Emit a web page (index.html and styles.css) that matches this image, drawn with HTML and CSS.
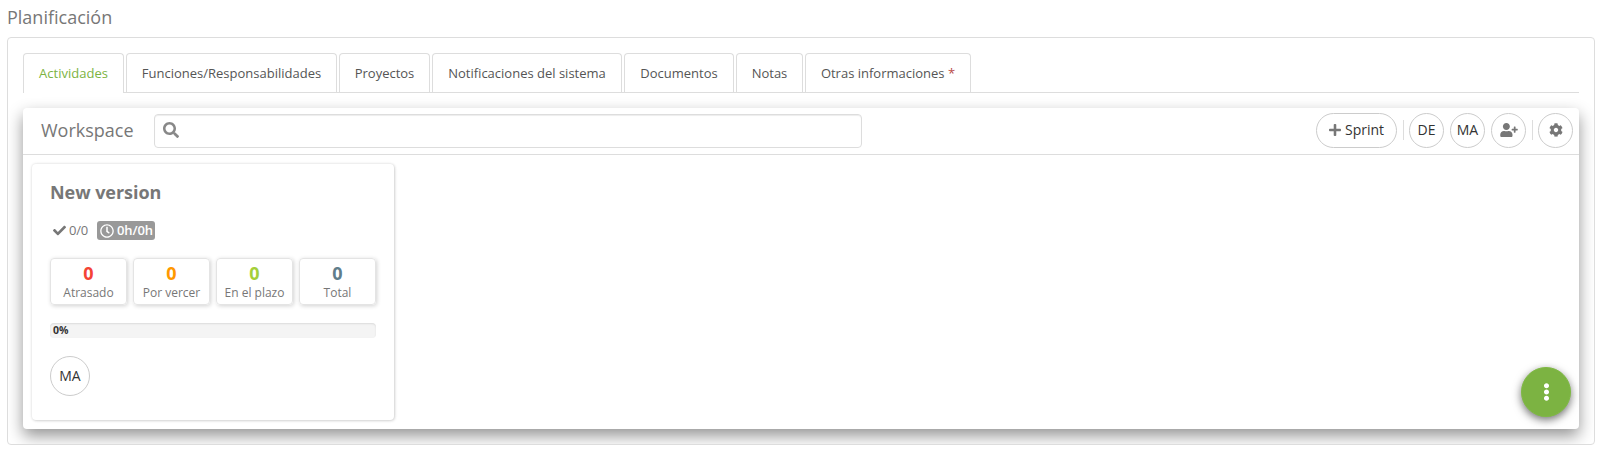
FILE: index.html
```html
<!DOCTYPE html>
<html lang="es">
<head>
<meta charset="utf-8">
<title>Planificación</title>
<link rel="stylesheet" href="styles.css">
</head>
<body>
<h1 class="page-title">Planificación</h1>
<main class="panel">
  <nav class="tabs">
    <a class="tab tab-actividades active">Actividades</a>
    <a class="tab tab-funciones">Funciones/Responsabilidades</a>
    <a class="tab tab-proyectos">Proyectos</a>
    <a class="tab tab-notificaciones">Notificaciones del sistema</a>
    <a class="tab tab-documentos">Documentos</a>
    <a class="tab tab-notas">Notas</a>
    <a class="tab tab-otras">Otras informaciones&nbsp;<span class="required">*</span></a>
  </nav>
  <section class="workspace">
    <header class="toolbar">
      <h2 class="toolbar-title">Workspace</h2>
      <div class="search">
        <svg class="icon" width="16" height="16" viewBox="0 0 512 512"><path d="M505 442.700L405.300 343c-4.500-4.500-10.600-7-17-7H372c27.600-35.300 44-79.700 44-128C416 93.100 322.900 0 208 0S0 93.100 0 208s93.100 208 208 208c48.300 0 92.700-16.400 128-44v16.300c0 6.400 2.500 12.500 7 17l99.700 99.700c9.400 9.400 24.600 9.400 33.900 0l28.300-28.300c9.400-9.400 9.400-24.600.1-34zM208 336c-70.700 0-128-57.200-128-128 0-70.700 57.200-128 128-128 70.700 0 128 57.200 128 128 0 70.700-57.200 128-128 128z"/></svg>
      </div>
      <div class="actions">
        <button class="pill sprint"><svg class="icon" width="12" height="14" viewBox="0 0 448 512"><path d="M416 208H272V64c0-17.670-14.330-32-32-32h-32c-17.670 0-32 14.330-32 32v144H32c-17.670 0-32 14.330-32 32v32c0 17.670 14.330 32 32 32h144v144c0 17.670 14.330 32 32 32h32c17.670 0 32-14.330 32-32V304h144c17.670 0 32-14.330 32-32v-32c0-17.670-14.330-32-32-32z"/></svg>Sprint</button>
        <span class="separator"></span>
        <button class="pill">DE</button>
        <button class="pill">MA</button>
        <button class="pill"><svg class="icon" width="18" height="14" viewBox="0 0 640 512"><path d="M624 208h-64v-64c0-8.800-7.200-16-16-16h-32c-8.800 0-16 7.200-16 16v64h-64c-8.800 0-16 7.200-16 16v32c0 8.800 7.200 16 16 16h64v64c0 8.800 7.200 16 16 16h32c8.800 0 16-7.200 16-16v-64h64c8.800 0 16-7.200 16-16v-32c0-8.800-7.200-16-16-16zm-400 48c70.700 0 128-57.300 128-128S294.700 0 224 0 96 57.300 96 128s57.300 128 128 128zm89.600 32h-16.700c-22.200 10.200-46.900 16-72.900 16s-50.600-5.800-72.900-16h-16.700C60.200 288 0 348.200 0 422.400V464c0 26.500 21.500 48 48 48h352c26.500 0 48-21.500 48-48v-41.600c0-74.200-60.200-134.400-134.400-134.400z"/></svg></button>
        <span class="separator"></span>
        <button class="pill"><svg class="icon" width="14" height="14" viewBox="0 0 512 512"><path d="M487.400 315.700l-42.600-24.600c4.300-23.200 4.300-47 0-70.200l42.600-24.600c4.900-2.800 7.100-8.600 5.500-14-11.100-35.600-30-67.800-54.700-94.600-3.800-4.100-10-5.100-14.800-2.300L380.800 110c-17.900-15.400-38.500-27.300-60.800-35.100V25.800c0-5.600-3.900-10.500-9.400-11.700-36.700-8.200-74.300-7.800-109.200 0-5.500 1.200-9.400 6.100-9.400 11.700V75c-22.200 7.900-42.800 19.800-60.800 35.100L88.700 85.500c-4.900-2.800-11-1.900-14.800 2.300-24.700 26.700-43.600 58.900-54.700 94.600-1.700 5.400.6 11.200 5.500 14L67.300 221c-4.300 23.200-4.300 47 0 70.200l-42.600 24.600c-4.900 2.800-7.100 8.600-5.500 14 11.100 35.600 30 67.800 54.700 94.600 3.800 4.100 10 5.100 14.800 2.300l42.600-24.600c17.900 15.400 38.500 27.300 60.800 35.100v49.200c0 5.600 3.900 10.500 9.400 11.700 36.700 8.200 74.300 7.800 109.200 0 5.500-1.200 9.400-6.100 9.400-11.700v-49.200c22.200-7.900 42.800-19.800 60.800-35.100l42.600 24.600c4.900 2.800 11 1.900 14.800-2.300 24.700-26.700 43.600-58.900 54.700-94.600 1.500-5.500-.7-11.300-5.600-14.100zM256 336c-44.100 0-80-35.900-80-80s35.900-80 80-80 80 35.900 80 80-35.900 80-80 80z"/></svg></button>
      </div>
    </header>
    <div class="board">
      <article class="card">
        <h3 class="card-title">New version</h3>
        <div class="meta">
          <svg class="icon" width="13" height="13" viewBox="0 0 512 512"><path d="M173.900 439.400l-166.400-166.400c-10-10-10-26.200 0-36.200l36.200-36.200c10-10 26.200-10 36.200 0L192 312.700 432.100 72.600c10-10 26.200-10 36.200 0l36.200 36.200c10 10 10 26.200 0 36.200l-294.400 294.400c-10 10-26.200 10-36.200 0z"/></svg>
          <span class="count">0/0</span>
          <span class="badge"><svg class="icon" width="14" height="14" viewBox="0 0 512 512"><path d="M256 8C119 8 8 119 8 256s111 248 248 248 248-111 248-248S393 8 256 8zm0 448c-110.500 0-200-89.500-200-200S145.500 56 256 56s200 89.500 200 200-89.500 200-200 200zm61.800-104.400l-84.900-61.700c-3.100-2.300-4.900-5.900-4.900-9.700V116c0-6.600 5.400-12 12-12h32c6.600 0 12 5.400 12 12v141.700l66.800 48.600c5.400 3.900 6.500 11.400 2.600 16.800L334.600 349c-3.900 5.300-11.400 6.500-16.800 2.600z"/></svg><span class="hours">0h/0h</span></span>
        </div>
        <div class="stats">
          <div class="stat"><b class="red">0</b><span>Atrasado</span></div>
          <div class="stat"><b class="orange">0</b><span>Por vercer</span></div>
          <div class="stat"><b class="lime">0</b><span>En el plazo</span></div>
          <div class="stat"><b class="slate">0</b><span>Total</span></div>
        </div>
        <div class="progress">0%</div>
        <div class="pill avatar">MA</div>
      </article>
    </div>
    <button class="fab"><svg class="icon" width="7" height="18" viewBox="0 0 192 512"><path d="M96 184c39.800 0 72 32.200 72 72s-32.200 72-72 72-72-32.200-72-72 32.200-72 72-72zM24 80c0 39.800 32.200 72 72 72s72-32.200 72-72S135.800 8 96 8 24 40.200 24 80zm0 352c0 39.800 32.200 72 72 72s72-32.200 72-72-32.200-72-72-72-72 32.200-72 72z"/></svg></button>
  </section>
</main>
</body>
</html>
```
FILE: styles.css
```css
* { box-sizing: border-box; }

body {
  margin: 0;
  height: 459px;
  overflow: hidden;
  background: #fff;
  color: #555;
  font: 13px/20px "Open Sans", sans-serif;
}

h1, h2, h3 { margin: 0; font-weight: 400; color: #777; }

.icon { display: block; flex: none; fill: currentColor; }

.page-title {
  height: 37px;
  padding: 5px 0 0 7px;
  font-size: 18px;
  line-height: 25px;
}

.panel {
  margin: 0 5px 0 7px;
  height: 408px;
  padding: 15px;
  border: 1px solid #ddd;
  border-radius: 4px;
  overflow: hidden;
}

.tabs {
  display: flex;
  gap: 2px;
  height: 40px;
  border-bottom: 1px solid #ddd;
}

.tab {
  height: 39px;
  padding-top: 9px;
  text-align: center;
  white-space: nowrap;
  border: 1px solid #ddd;
  border-bottom: 0;
  border-radius: 4px 4px 0 0;
}

.tab.active { height: 40px; color: #7cb342; background: #fff; }
.tab-actividades { width: 101px; }
.tab-funciones { width: 211px; }
.tab-proyectos { width: 91px; }
.tab-notificaciones { width: 190px; }
.tab-documentos { width: 110px; }
.tab-notas { width: 67px; }
.tab-otras { width: 166px; }
.required { color: #b94a48; }

.workspace {
  position: relative;
  height: 321px;
  margin-top: 15px;
  background: #fff;
  border-radius: 4px;
  box-shadow: 0 7px 16px rgba(0, 0, 0, .42);
  clip-path: inset(-15px -15px -15px -15px);
}

.toolbar {
  display: flex;
  align-items: center;
  height: 47px;
  padding: 0 6px 0 18px;
  border-bottom: 1px solid #ddd;
}

.toolbar-title { width: 113px; padding-bottom: 2px; font-size: 18px; line-height: 25px; }

.search {
  display: flex;
  align-items: center;
  width: 708px;
  height: 34px;
  padding: 0 8px 2px;
  color: #888;
  border: 1px solid #ddd;
  border-radius: 4px;
  box-shadow: inset 0 1px 1px rgba(0, 0, 0, .075);
}

.actions { display: flex; align-items: center; gap: 6px; margin: 0 0 2px auto; }

.pill {
  display: flex;
  align-items: center;
  justify-content: center;
  width: 35px;
  height: 35px;
  padding: 0;
  font: 14px/20px "Open Sans", sans-serif;
  color: #333;
  background: #fff;
  border: 1px solid #ccc;
  border-radius: 20px;
}

.pill .icon { color: #777; }
.sprint { width: 81px; gap: 4px; }
.separator { width: 1px; height: 20px; margin-right: -1px; background: #ddd; }

.board { padding: 9px; }

.card {
  width: 362px;
  height: 256px;
  padding: 15px 18px;
  border-radius: 4px;
  box-shadow: 0 0 3px rgba(0, 0, 0, .14), 1px 1px 3px rgba(0, 0, 0, .12);
}

.card-title { font-size: 18px; line-height: 26px; font-weight: 700; letter-spacing: -.05px; }

.meta {
  display: flex;
  align-items: center;
  height: 19px;
  margin-top: 16px;
  padding-left: 3px;
  color: #777;
}

.meta .count { width: 28px; margin-left: 3px; padding-bottom: 2px; letter-spacing: -.2px; }

.badge {
  display: flex;
  align-items: center;
  gap: 3px;
  width: 58px;
  height: 19px;
  padding: 0 3px;
  color: #fff;
  font-weight: 600;
  letter-spacing: -.1px;
  background: #999;
  border-radius: 3px;
}

.hours { padding-bottom: 2px; }

.stats { display: flex; gap: 6px; margin-top: 18px; }

.stat {
  display: flex;
  flex-direction: column;
  width: 77px;
  height: 47px;
  padding-top: 4px;
  text-align: center;
  font-size: 12px;
  line-height: 20px;
  color: #777;
  border: 1px solid #e4e4e4;
  border-radius: 4px;
  box-shadow: 1px 1px 4px rgba(0, 0, 0, .18);
}

.stat b { font-size: 18px; line-height: 20px; }
.red { color: #f44336; }
.orange { color: #ff9800; }
.lime { color: #a4cf3a; }
.slate { color: #607d8b; }

.progress {
  height: 15px;
  margin-top: 18px;
  padding-left: 3px;
  font-size: 10.5px;
  line-height: 14px;
  font-weight: 700;
  color: #333;
  background: #f4f4f4;
  border-radius: 4px;
  box-shadow: inset 0 1px 2px rgba(0, 0, 0, .1);
}

.avatar { width: 40px; height: 40px; margin-top: 18px; }

.fab {
  position: absolute;
  right: 8px;
  bottom: 12px;
  display: flex;
  align-items: center;
  justify-content: center;
  width: 50px;
  height: 50px;
  padding: 0;
  color: #fff;
  background: #7cb342;
  border: 1px solid #7fb944;
  border-radius: 50%;
  box-shadow: 0 3px 8px rgba(0, 0, 0, .55);
}
```
